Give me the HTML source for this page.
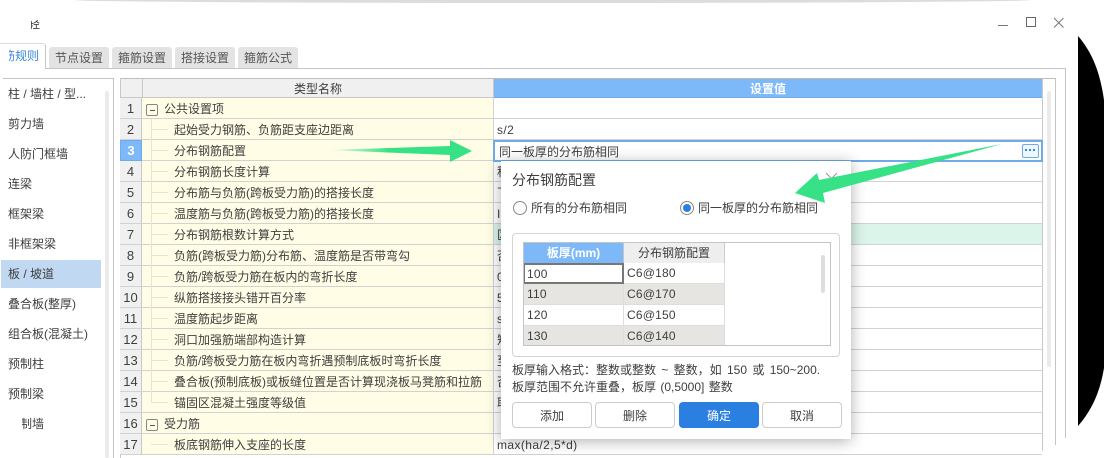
<!DOCTYPE html>
<html lang="zh"><head><meta charset="utf-8"><style>
html,body{margin:0;padding:0;background:#fff}
#p{position:relative;width:1104px;height:458px;overflow:hidden;background:#fff;font:12px/21px "Liberation Sans","Noto Sans CJK SC",sans-serif;color:#3e3e3e}
#p div,#p span{position:absolute;white-space:nowrap}
.tab{top:47px;height:21px;background:#e3e3e3;border-radius:3px 3px 0 0;text-align:center;line-height:22px;color:#555}
.s{left:8px;height:20px;line-height:20px}
.r{left:120px;width:922px;height:20px;border-bottom:1px solid #d2d2d2}
.n{left:0;top:0;width:21px;height:20px;background:#f0f0f0;border-right:1px solid #c8c8c8;text-align:center;font-size:13px;line-height:22px}
.c{left:22px;top:0;width:351px;height:20px;background:#fffde6;border-right:1px solid #d2d2d2}
.t{left:32px;top:1px}
.tt{left:22px;top:1px}
.v{left:377px;top:1px;letter-spacing:.4px}
.g{left:9px;top:10px;width:17px;height:1px;background:#e4e4d8}
.m{left:4px;top:6px;width:10px;height:10px;border:1px solid #888;border-radius:2px;background:#fffde6}
.m:after{content:"";position:absolute;left:3px;top:5px;width:5px;height:1px;background:#555}
.tc{height:21px;line-height:21px;padding-left:3px;box-sizing:border-box;border-bottom:1px solid #ddd;border-right:1px solid #ddd;font-size:12px;letter-spacing:.2px}
.b{top:402px;width:78px;height:24px;line-height:26px;border:1px solid #ccc;border-radius:4px;text-align:center;background:#fff}
</style></head><body><div id="p">

<div style="left:75px;top:0;width:955px;height:3px;background:#dcdcdc;border-radius:0 0 50% 50%/0 0 100% 100%"></div>
<svg width="1104" height="458" style="position:absolute;left:0;top:0"><path d="M1078 36C1092 52 1100 72 1104 100V368C1100 392 1092 410 1078 426Z" fill="#000"/></svg>

<div style="left:31px;top:20px;width:9px;height:9px;overflow:hidden"><span style="left:-3px;top:-6px;line-height:21px">轻</span></div>
<div style="left:998px;top:25px;width:10px;height:1px;background:#777"></div>
<div style="left:1026px;top:17px;width:8px;height:8px;border:1px solid #666"></div>
<svg width="12" height="12" style="position:absolute;left:1053px;top:17px"><path d="M1 1L10.500 10.500M10.500 1L1 10.500" stroke="#777" fill="none"/></svg>

<div style="left:0;top:68px;width:1065px;height:1px;background:#c4c4c4"></div>
<div style="left:1065px;top:68px;width:1px;height:370px;background:#c4c4c4"></div>
<div style="left:1055px;top:78px;width:1px;height:367px;background:#c4c4c4"></div>
<div style="left:0;top:43px;width:46px;height:26px;background:#fff;border-right:1px solid #c4c4c4;border-top:1px solid #dcdcdc;border-radius:0 3px 0 0;box-sizing:border-box"></div>
<div style="left:9px;top:44px;width:32px;height:24px;overflow:hidden;color:#3a86dc"><span style="left:-6px;top:2px">筋规则</span></div>
<div class="tab" style="left:49px;width:60px">节点设置</div>
<div class="tab" style="left:112px;width:60px">箍筋设置</div>
<div class="tab" style="left:175px;width:60px">搭接设置</div>
<div class="tab" style="left:238px;width:60px">箍筋公式</div>

<div style="left:3px;top:78px;width:110px;height:1px;background:#c4c4c4"></div>
<div style="left:113px;top:78px;width:1px;height:380px;background:#c4c4c4"></div>
<div style="left:105px;top:91px;width:4px;height:367px;background:#ebebeb;border-radius:2px"></div>
<div style="left:1px;top:260px;width:100px;height:28px;background:#c0d8f2"></div>
<div class="s" style="top:84px">柱 / 墙柱 / 型...</div>
<div class="s" style="top:114px">剪力墙</div>
<div class="s" style="top:144px">人防门框墙</div>
<div class="s" style="top:174px">连梁</div>
<div class="s" style="top:204px">框架梁</div>
<div class="s" style="top:234px">非框架梁</div>
<div class="s" style="top:264px">板 / 坡道</div>
<div class="s" style="top:294px">叠合板(整厚)</div>
<div class="s" style="top:324px">组合板(混凝土)</div>
<div class="s" style="top:354px">预制柱</div>
<div class="s" style="top:384px">预制梁</div>
<div class="s" style="top:414px;left:22px;width:24px;overflow:hidden"><span style="left:-14px;top:0;line-height:20px">预制墙</span></div>

<div style="left:120px;top:78px;width:935px;height:1px;background:#bdbdbd"></div>
<div style="left:120px;top:78px;width:1px;height:380px;background:#c8c8c8"></div>
<div style="left:1042px;top:78px;width:1px;height:373px;background:#c8c8c8"></div>
<div style="left:1047px;top:91px;width:4px;height:276px;background:#ebebeb;border-radius:2px"></div>
<div style="left:121px;top:79px;width:21px;height:18px;background:#f0f0f0;border-right:1px solid #c8c8c8;border-bottom:1px solid #c8c8c8"></div>
<div style="left:143px;top:79px;width:350px;height:18px;background:#f0f0f0;border-bottom:1px solid #c8c8c8;text-align:center;line-height:20px;border-right:1px solid #c8c8c8">类型名称</div>
<div style="left:494px;top:79px;width:548px;height:18px;background:#7db9f8;border-bottom:1px solid #6fabe8;text-align:center;line-height:21px;color:#fff;font-weight:bold">设置值</div>

<div class="r" style="top:98px"><div class="n">1</div><div class="c"><div class="m"></div><div class="tt">公共设置项</div></div></div>
<div class="r" style="top:119px"><div class="n">2</div><div class="c"><div class="g"></div><div class="t">起始受力钢筋、负筋距支座边距离</div></div><div class="v">s/2</div></div>
<div class="r" style="top:140px"><div class="n" style="background:#7db9f8;color:#fff;font-weight:bold;border:1px solid #6fabe8;box-sizing:border-box;width:22px;height:21px;line-height:20px">3</div><div class="c"><div class="g"></div><div class="t">分布钢筋配置</div></div></div>
<div class="r" style="top:161px"><div class="n">4</div><div class="c"><div class="g"></div><div class="t">分布钢筋长度计算</div></div><div class="v">程序</div></div>
<div class="r" style="top:182px"><div class="n">5</div><div class="c"><div class="g"></div><div class="t">分布筋与负筋(跨板受力筋)的搭接长度</div></div><div class="v">下</div></div>
<div class="r" style="top:203px"><div class="n">6</div><div class="c"><div class="g"></div><div class="t">温度筋与负筋(跨板受力筋)的搭接长度</div></div><div class="v">I</div></div>
<div class="r" style="top:224px"><div style="left:373px;top:0;width:549px;height:20px;background:#dcf5ea"></div><div class="n">7</div><div class="c"><div class="g"></div><div class="t">分布钢筋根数计算方式</div></div><div class="v">区</div></div>
<div class="r" style="top:245px"><div class="n">8</div><div class="c"><div class="g"></div><div class="t">负筋(跨板受力筋)分布筋、温度筋是否带弯勾</div></div><div class="v">否</div></div>
<div class="r" style="top:266px"><div class="n">9</div><div class="c"><div class="g"></div><div class="t">负筋/跨板受力筋在板内的弯折长度</div></div><div class="v">0</div></div>
<div class="r" style="top:287px"><div class="n">10</div><div class="c"><div class="g"></div><div class="t">纵筋搭接接头错开百分率</div></div><div class="v">5</div></div>
<div class="r" style="top:308px"><div class="n">11</div><div class="c"><div class="g"></div><div class="t">温度筋起步距离</div></div><div class="v">s</div></div>
<div class="r" style="top:329px"><div class="n">12</div><div class="c"><div class="g"></div><div class="t">洞口加强筋端部构造计算</div></div><div class="v">矩</div></div>
<div class="r" style="top:350px"><div class="n">13</div><div class="c"><div class="g"></div><div class="t">负筋/跨板受力筋在板内弯折遇预制底板时弯折长度</div></div><div class="v">至</div></div>
<div class="r" style="top:371px"><div class="n">14</div><div class="c"><div class="g"></div><div class="t">叠合板(预制底板)或板缝位置是否计算现浇板马凳筋和拉筋</div></div><div class="v">否</div></div>
<div class="r" style="top:392px"><div class="n">15</div><div class="c"><div class="g"></div><div class="t">锚固区混凝土强度等级值</div></div><div class="v">取</div></div>
<div class="r" style="top:413px"><div class="n">16</div><div class="c"><div class="m"></div><div class="tt">受力筋</div></div></div>
<div class="r" style="top:434px"><div class="n">17</div><div class="c"><div class="g"></div><div class="t">板底钢筋伸入支座的长度</div></div><div class="v">max(ha/2,5*d)</div></div>
<div style="left:151px;top:119px;width:1px;height:283px;background:#e4e4d8"></div>

<div style="left:493px;top:140px;width:550px;height:22px;border:2px solid #6fabe8;box-sizing:border-box;background:#fff;line-height:20px;padding-left:4px">同一板厚的分布筋相同</div>
<div style="left:1022px;top:144px;width:15px;height:12px;border:1px solid #6fabe8;border-radius:2px;background:#eef6fe"></div>
<div style="left:1025px;top:149px;width:2px;height:2px;background:#3a86dc"></div>
<div style="left:1029px;top:149px;width:2px;height:2px;background:#3a86dc"></div>
<div style="left:1033px;top:149px;width:2px;height:2px;background:#3a86dc"></div>

<div style="left:501px;top:161px;width:350px;height:278px;background:#fff;box-shadow:0 2px 14px rgba(0,0,0,.32)"></div>
<div style="left:512px;top:169px;font-size:14px;line-height:22px">分布钢筋配置</div>
<svg width="14" height="14" style="position:absolute;left:825px;top:172px"><path d="M1 1L12 12M12 1L1 12" stroke="#999" fill="none"/></svg>
<div style="left:513px;top:201px;width:12px;height:12px;border:1px solid #888;border-radius:50%"></div>
<div style="left:531px;top:198px">所有的分布筋相同</div>
<div style="left:680px;top:201px;width:12px;height:12px;border:1px solid #888;border-radius:50%"></div>
<div style="left:683px;top:204px;width:8px;height:8px;background:#2b7fe0;border-radius:50%"></div>
<div style="left:698px;top:198px">同一板厚的分布筋相同</div>

<div style="left:512px;top:233px;width:328px;height:124px;border:1px solid #d4d4d4;border-radius:4px;box-sizing:border-box"></div>
<div style="left:523px;top:242px;width:308px;height:104px;border:1px solid #c4c4c4;box-sizing:border-box;overflow:hidden">
 <div style="left:0;top:0;width:99px;height:20px;background:#7db9f8;color:#fff;font-weight:bold;text-align:center;border-right:1px solid #c4c4c4;line-height:21px">板厚(mm)</div>
 <div style="left:100px;top:0;width:100px;height:20px;background:#eee;text-align:center;border-right:1px solid #ccc;line-height:21px;border-bottom:1px solid #ccc">分布钢筋配置</div>
 <div class="tc" style="left:0;top:20px;width:100px;border:2px solid #777;border-left-width:1px;padding-left:2px;line-height:18px;background:#fff">100</div>
 <div class="tc" style="left:100px;top:20px;width:101px;background:#fff">C6@180</div>
 <div class="tc" style="left:0;top:41px;width:100px;background:#e6e5e1">110</div>
 <div class="tc" style="left:100px;top:41px;width:101px;background:#e6e5e1">C6@170</div>
 <div class="tc" style="left:0;top:62px;width:100px;background:#fff">120</div>
 <div class="tc" style="left:100px;top:62px;width:101px;background:#fff">C6@150</div>
 <div class="tc" style="left:0;top:83px;width:100px;background:#e6e5e1">130</div>
 <div class="tc" style="left:100px;top:83px;width:101px;background:#e6e5e1">C6@140</div>
</div>
<div style="left:821px;top:255px;width:4px;height:38px;background:#ddd;border-radius:2px"></div>

<div style="left:512px;top:360px;line-height:21px;word-spacing:2px">板厚输入格式：整数或整数 ~ 整数，如 150 或 150~200.</div>
<div style="left:512px;top:377px;line-height:21px;word-spacing:1px">板厚范围不允许重叠，板厚 (0,5000] 整数</div>
<div class="b" style="left:512px">添加</div>
<div class="b" style="left:595px">删除</div>
<div class="b" style="left:679px;border-color:#2b7fe0;background:#2b7fe0;color:#fff">确定</div>
<div class="b" style="left:762px">取消</div>

<svg width="1104" height="458" style="position:absolute;left:0;top:0">
<defs><linearGradient id="a" x1="327" x2="450" y1="0" y2="0" gradientUnits="userSpaceOnUse"><stop offset="0" stop-color="#36e285" stop-opacity="0"/><stop offset=".5" stop-color="#36e285"/></linearGradient></defs>
<path d="M327 150L450 146V155Z" fill="url(#a)"/>
<path d="M450 146V140L472 151L450 162V155Z" fill="#36e285"/>
<path d="M1002 144L819 180L817 173L795 193L825 203L823 193Z" fill="#36e285"/>
</svg>
</div></body></html>
